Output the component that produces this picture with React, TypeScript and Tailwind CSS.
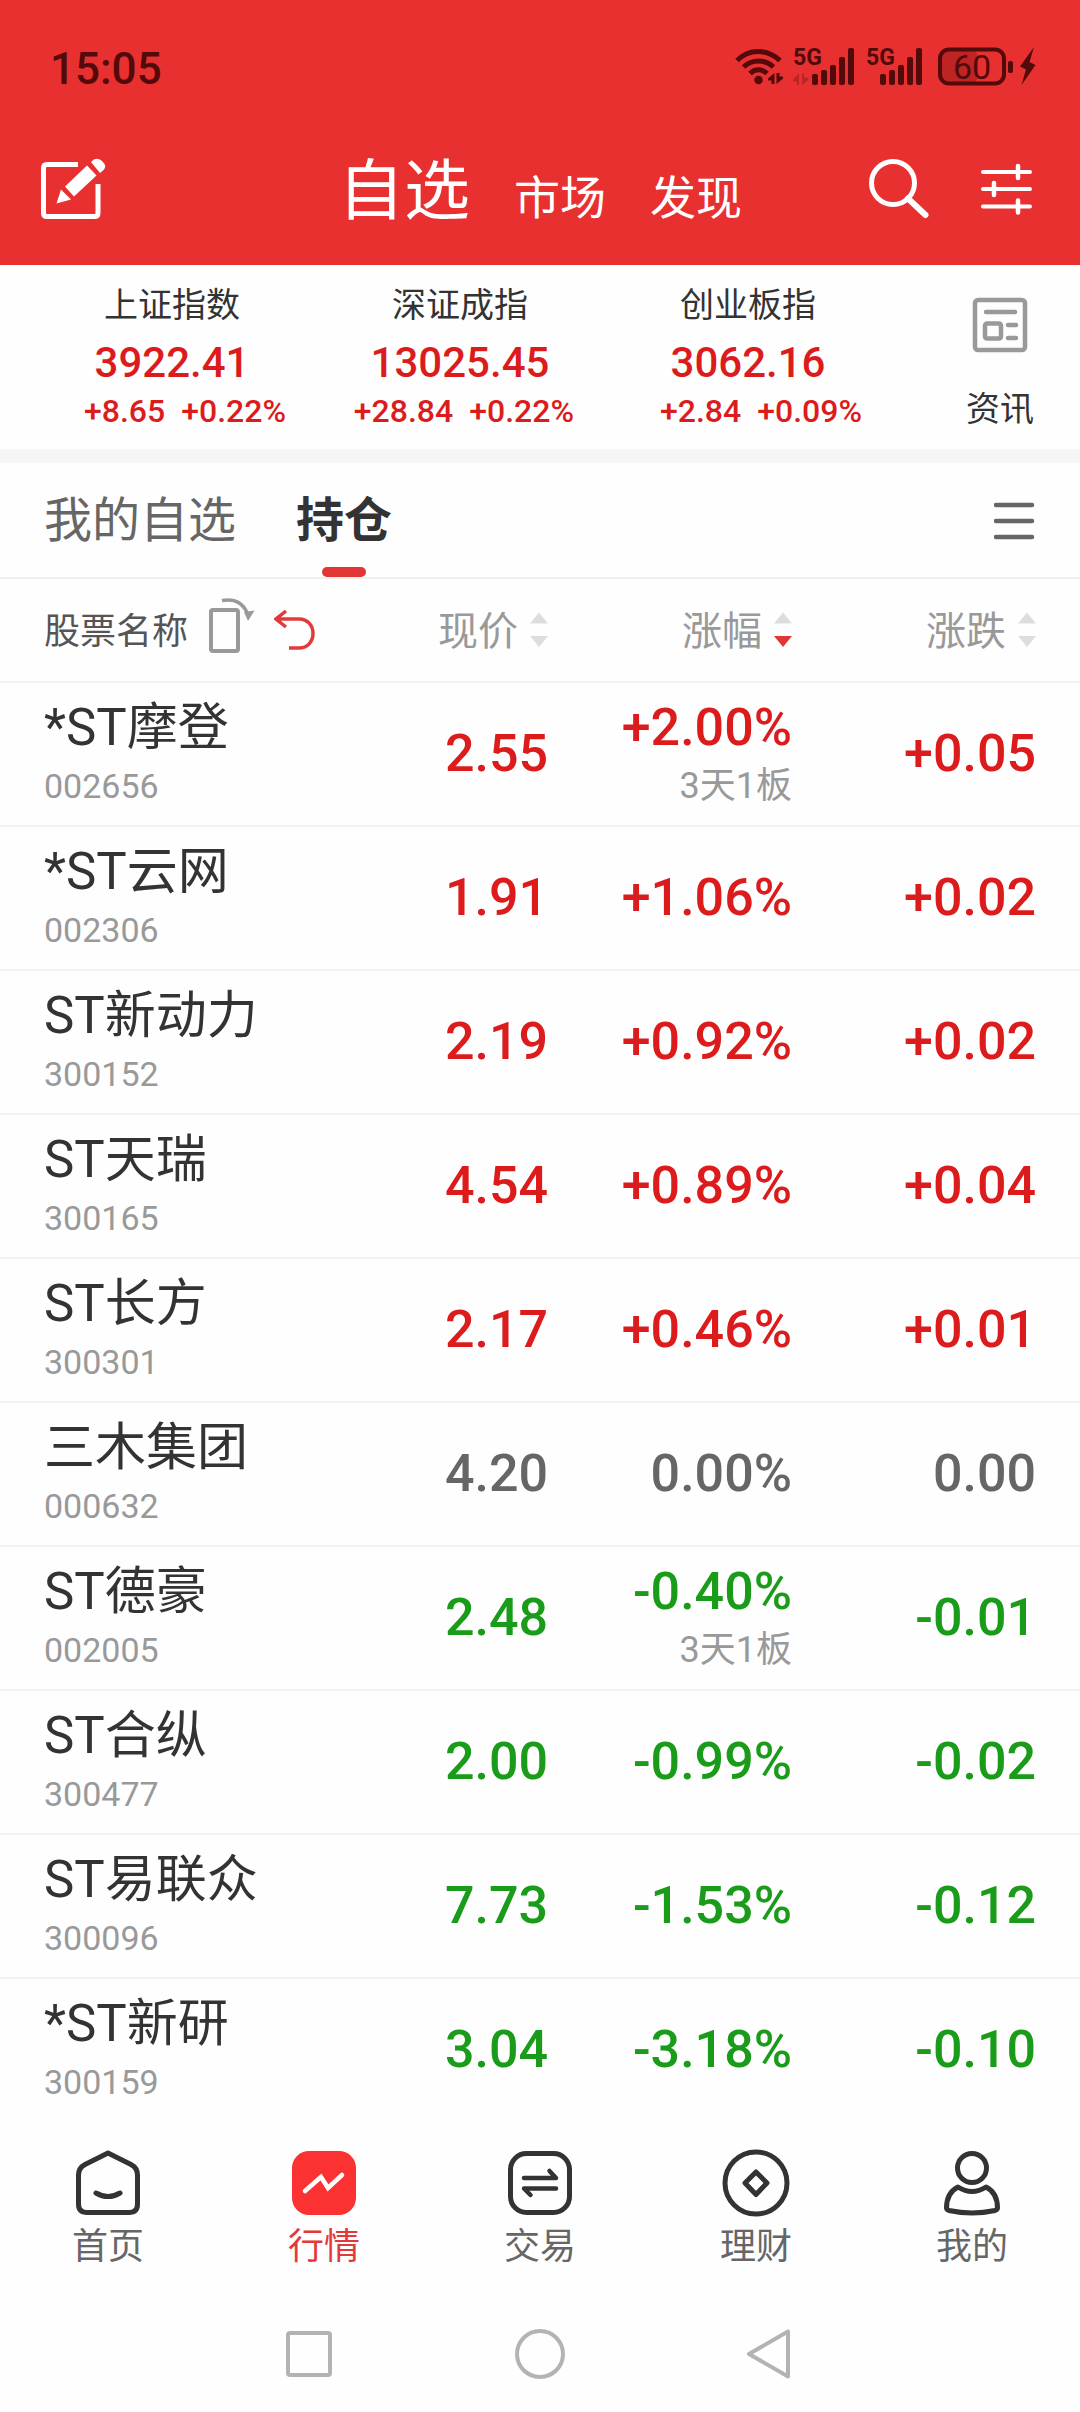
import type { ReactNode } from "react";
import clsx from "clsx";

type MarketIndex = {
  name: string;
  value: string;
  change: string;
  percent: string;
};

type Holding = {
  name: string;
  code: string;
  price: string;
  percent: string;
  change: string;
  note?: string;
};

const indices: MarketIndex[] = [
  { name: "上证指数", value: "3922.41", change: "+8.65", percent: "+0.22%" },
  { name: "深证成指", value: "13025.45", change: "+28.84", percent: "+0.22%" },
  { name: "创业板指", value: "3062.16", change: "+2.84", percent: "+0.09%" },
];

const holdings: Holding[] = [
  { name: "*ST摩登", code: "002656", price: "2.55", percent: "+2.00%", change: "+0.05", note: "3天1板" },
  { name: "*ST云网", code: "002306", price: "1.91", percent: "+1.06%", change: "+0.02" },
  { name: "ST新动力", code: "300152", price: "2.19", percent: "+0.92%", change: "+0.02" },
  { name: "ST天瑞", code: "300165", price: "4.54", percent: "+0.89%", change: "+0.04" },
  { name: "ST长方", code: "300301", price: "2.17", percent: "+0.46%", change: "+0.01" },
  { name: "三木集团", code: "000632", price: "4.20", percent: "0.00%", change: "0.00" },
  { name: "ST德豪", code: "002005", price: "2.48", percent: "-0.40%", change: "-0.01", note: "3天1板" },
  { name: "ST合纵", code: "300477", price: "2.00", percent: "-0.99%", change: "-0.02" },
  { name: "ST易联众", code: "300096", price: "7.73", percent: "-1.53%", change: "-0.12" },
  { name: "*ST新研", code: "300159", price: "3.04", percent: "-3.18%", change: "-0.10" },
];

function trendColor(change: string) {
  if (change.startsWith("+")) return "text-[#dc1c1c]";
  if (change.startsWith("-")) return "text-[#1a9c1a]";
  return "text-[#666666]";
}

function WifiIcon() {
  return (
    <svg width="48" height="40" viewBox="0 0 48 40" fill="none" aria-hidden="true">
      <g stroke="#520a0a" strokeWidth="5">
        <path d="M2 13.500C14 1.500 32 1.500 45 13.500" />
        <path d="M8.500 20C17 12 30 12 38.500 20" />
        <path d="M15 26.500C20 21.500 27 21.500 32 26.500" />
      </g>
      <circle cx="23.500" cy="33" r="4.300" fill="#520a0a" />
      <path d="M33 31.500L39.500 26V37H36.500V33.500H33ZM48 31.500L41.500 37V26H44.500V29.500H48Z" fill="#520a0a" />
    </svg>
  );
}

function SignalIcon({ data = false }: { data?: boolean }) {
  const start = data ? 19 : 14;
  return (
    <svg
      width={data ? 63 : 58}
      height="56"
      viewBox={data ? "0 -8 63 56" : "0 -8 58 56"}
      fill="#520a0a"
      aria-hidden="true"
    >
      <text x="0" y="18" fontSize="23" fontWeight="700" fontFamily="Roboto, sans-serif">
        5G
      </text>
      {data ? (
        <path d="M0 32.500L6 26.500V38H4V34.500H0ZM15.500 32.500L9 38V26.500H11V30.500H15.500Z" opacity="0.300" />
      ) : null}
      {[11, 15, 20, 28, 37].map((height, index) => (
        <rect key={height} x={start + index * 9} y={38 - height} width="6" height={height} rx="2" />
      ))}
    </svg>
  );
}

function BatteryIcon() {
  return (
    <svg width="100" height="40" viewBox="0 0 100 40" fill="none" aria-hidden="true">
      <rect x="2" y="2.500" width="38" height="34" rx="8" fill="#bf2424" />
      <rect x="2" y="2.500" width="64" height="34" rx="9" stroke="#520a0a" strokeWidth="4" />
      <rect x="70" y="14" width="5" height="12" rx="2" fill="#520a0a" />
      <text
        x="34"
        y="32"
        fontSize="34"
        textAnchor="middle"
        fontFamily="Roboto, sans-serif"
        fill="#520a0a"
      >
        60
      </text>
      <path d="M96 0L82 19.500L88 22.500L83.500 38L97.500 18L91.500 15Z" fill="#520a0a" />
    </svg>
  );
}

function EditIcon() {
  return (
    <svg width="66" height="64" viewBox="0 0 66 64" fill="none" aria-hidden="true">
      <path
        d="M38 6.500H7Q3.500 6.500 3.500 10V55Q3.500 58.500 7 58.500H54.500Q58 58.500 58 55V26"
        stroke="#ffffff"
        strokeWidth="5"
      />
      <path d="M25 28.500L47 7.500L56.500 17.500L34 38.500Z" fill="#ffffff" />
      <path d="M21 31.500L31 41.500L16.500 45.500Z" fill="#ffffff" />
      <path d="M51 4Q56 -2 62 3Q67.500 8 63.500 12L60 15Z" fill="#ffffff" />
    </svg>
  );
}

function SearchIcon() {
  return (
    <svg width="62" height="62" viewBox="0 0 62 62" fill="none" aria-hidden="true">
      <circle cx="25" cy="25" r="21.500" stroke="#ffffff" strokeWidth="5" />
      <path d="M40 40.500L57.500 57" stroke="#ffffff" strokeWidth="6" strokeLinecap="round" />
    </svg>
  );
}

function FilterIcon() {
  return (
    <svg width="52" height="52" viewBox="0 0 52 52" fill="none" aria-hidden="true">
      <g stroke="#ffffff" strokeWidth="4" strokeLinecap="round">
        <path d="M3 9H50M3 26H50M3 43.500H50" />
        <path d="M38 3V15M14 20V32M38 37.500V49.500" strokeWidth="4.500" />
      </g>
    </svg>
  );
}

function NewsIcon() {
  return (
    <svg width="56" height="56" viewBox="0 0 56 56" fill="none" aria-hidden="true">
      <g stroke="#999999" strokeWidth="4.500" strokeLinecap="round">
        <rect x="3" y="3" width="50" height="50" rx="3" />
        <path d="M14 15H43M36 28H44M36 41H44" />
        <rect x="13" y="26.500" width="16" height="15" rx="2" />
      </g>
    </svg>
  );
}

function MenuIcon() {
  return (
    <svg width="42" height="38" viewBox="0 0 42 38" fill="none" aria-hidden="true">
      <path d="M2 3H38M2 19H38M2 35H38" stroke="#666666" strokeWidth="4.500" strokeLinecap="round" />
    </svg>
  );
}

function RotateIcon() {
  return (
    <svg width="48" height="56" viewBox="0 0 48 56" fill="none" aria-hidden="true">
      <rect x="3" y="12" width="27" height="41" rx="2" stroke="#999999" strokeWidth="4" />
      <path d="M14 2.500C28 0 36 6 40 17" stroke="#999999" strokeWidth="3.500" />
      <path d="M36 14L46.500 12.500L40 23Z" fill="#999999" />
    </svg>
  );
}

function UndoIcon() {
  return (
    <svg width="42" height="42" viewBox="0 0 42 42" fill="none" aria-hidden="true">
      <path
        d="M12 2L2 10L12 18M2 10H25C34 10 39 17 39 24.500C39 32 34 39 25 39H15"
        stroke="#e23a3a"
        strokeWidth="3.500"
      />
    </svg>
  );
}

function SortIcon({ active = false }: { active?: boolean }) {
  return (
    <svg width="18" height="36" viewBox="0 0 18 36" aria-hidden="true">
      <path d="M9 0.500L18 11.500H0Z" fill="#dddddd" />
      <path d="M9 35L18 24H0Z" fill={active ? "#e23535" : "#dddddd"} />
    </svg>
  );
}

function TabIcon({ children }: { children: ReactNode }) {
  return (
    <svg
      width="68"
      height="68"
      viewBox="0 0 68 68"
      fill="none"
      stroke="#333333"
      strokeWidth="5"
      strokeLinecap="round"
      strokeLinejoin="round"
      aria-hidden="true"
    >
      {children}
    </svg>
  );
}

const tabs = [
  {
    label: "首页",
    icon: (
      <TabIcon>
        <path d="M34 4L11 15.500Q4.500 19 4.500 26V55Q4.500 63.500 13 63.500H55Q63.500 63.500 63.500 55V26Q63.500 19 57 15.500Z" />
        <path d="M22 44Q34 51 46 44" />
      </TabIcon>
    ),
  },
  {
    label: "行情",
    active: true,
    icon: (
      <TabIcon>
        <rect x="2" y="2" width="64" height="64" rx="17" fill="#fc3131" stroke="none" />
        <path d="M15 42L31 28L38 39L52 26" stroke="#ffffff" strokeWidth="4.500" strokeLinejoin="miter" />
      </TabIcon>
    ),
  },
  {
    label: "交易",
    icon: (
      <TabIcon>
        <rect x="4.500" y="4.500" width="59" height="59" rx="16" />
        <path d="M18 29H50L43.500 22M50 39.500H18L24.500 46" strokeWidth="4.500" />
      </TabIcon>
    ),
  },
  {
    label: "理财",
    icon: (
      <TabIcon>
        <circle cx="34" cy="34" r="31" />
        <path d="M34 23L45 34L34 45.500L23 34Z" />
      </TabIcon>
    ),
  },
  {
    label: "我的",
    icon: (
      <TabIcon>
        <circle cx="34" cy="19" r="14.500" />
        <path d="M20 38Q34 47 48 38C56 42 59.500 50 59.500 59Q59.500 60.500 57 61.500Q34 66.500 11 61.500Q8.500 60.500 8.500 59C8.500 50 12 42 20 38Z" />
      </TabIcon>
    ),
  },
];

function SortHeader({ label, active }: { label: string; active?: boolean }) {
  return (
    <button type="button" className="inline-flex items-center gap-3 text-[40px] font-normal text-[#999999]">
      <span className="pt-1">{label}</span>
      <SortIcon active={active} />
    </button>
  );
}

function HoldingRow({ item }: { item: Holding }) {
  const color = trendColor(item.change);

  return (
    <tr className="h-36 border-b-2 border-[#f2f2f2] last:border-transparent">
      <th scope="row" className="pl-11 text-left font-normal">
        <div className="text-[51px] leading-[64px] text-[#333333]">{item.name}</div>
        <div className="text-[34px] leading-[52px] text-[#999999]">{item.code}</div>
      </th>
      <td className={clsx("text-right text-[52px] font-medium", color)}>{item.price}</td>
      <td className="text-right">
        <div className={clsx("text-[52px] leading-[64px] font-medium", color)}>{item.percent}</div>
        {item.note ? <div className="text-[36px] leading-[52px] text-[#999999]">{item.note}</div> : null}
      </td>
      <td className={clsx("pr-11 text-right text-[52px] font-medium", color)}>{item.change}</td>
    </tr>
  );
}

export default function App() {
  return (
    <div className="min-h-screen w-full bg-[#fefefe] font-[Roboto,'Noto_Sans_CJK_SC',sans-serif]">
      <header className="bg-[#e93030]">
        <div className="flex h-[134px] items-center justify-between pr-[42px] pl-[50px]">
          <span className="pt-1 text-[44px] font-medium text-[#520a0a]">15:05</span>
          <div className="flex items-center gap-[10px]">
            <WifiIcon />
            <SignalIcon data />
            <SignalIcon />
            <span className="pl-1">
              <BatteryIcon />
            </span>
          </div>
        </div>
        <div className="flex h-[131px] items-start justify-between px-10">
          <button type="button" aria-label="编辑" className="flex w-[172px] pt-6">
            <EditIcon />
          </button>
          <nav className="flex items-baseline gap-11 text-[46px] text-white">
            <a href="#watchlist" className="text-[66px] leading-[116px]">
              自选
            </a>
            <a href="#market">市场</a>
            <a href="#discover">发现</a>
          </nav>
          <div className="flex w-[172px] items-center justify-between pt-6">
            <button type="button" aria-label="搜索">
              <SearchIcon />
            </button>
            <button type="button" aria-label="筛选" className="pr-2">
              <FilterIcon />
            </button>
          </div>
        </div>
      </header>

      <section className="flex h-[184px] pl-7">
        <div className="grid flex-1 grid-cols-3">
          {indices.map((item) => (
            <a key={item.name} href="#index" className="flex flex-col pt-4">
              <span className="text-center text-[34px] leading-[48px] text-[#333333]">{item.name}</span>
              <span className="mt-1 text-center text-[42px] leading-[60px] font-medium text-[#dc1c1c]">
                {item.value}
              </span>
              <span className="flex justify-end gap-4 pr-[30px] text-[32px] leading-[36px] font-medium text-[#dc1c1c]">
                <span>{item.change}</span>
                <span>{item.percent}</span>
              </span>
            </a>
          ))}
        </div>
        <a href="#news" className="flex w-[188px] flex-col items-center pt-8 pl-7 text-[34px] leading-[48px] text-[#333333]">
          <NewsIcon />
          <span className="mt-8">资讯</span>
        </a>
      </section>

      <div className="h-[14px] bg-[#f5f5f5]" />

      <div className="flex h-[116px] items-center justify-between border-b-2 border-[#f0f0f0] pr-11 pl-11">
        <div className="flex h-full gap-[60px] text-[48px]">
          <button type="button" className="pt-0.5 text-[#666666]">
            我的自选
          </button>
          <button type="button" className="relative pt-0.5 font-bold text-[#333333]">
            持仓
            <span className="absolute bottom-0 left-1/2 h-[10px] w-11 -translate-x-1/2 rounded-full bg-[#e23535]" />
          </button>
        </div>
        <button type="button" aria-label="菜单" className="pt-0.5">
          <MenuIcon />
        </button>
      </div>

      <table className="w-full table-fixed border-collapse">
        <colgroup>
          <col />
          <col className="w-[212px]" />
          <col className="w-[244px]" />
          <col className="w-[288px]" />
        </colgroup>
        <thead>
          <tr className="h-[103px] border-b-2 border-[#f2f2f2]">
            <th scope="col" className="pl-11 text-left">
              <div className="flex items-center text-[36px] font-normal text-[#555555]">
                <span className="pt-1">股票名称</span>
                <button type="button" aria-label="横屏" className="ml-5 pb-2">
                  <RotateIcon />
                </button>
                <button type="button" aria-label="恢复排序" className="ml-[18px]">
                  <UndoIcon />
                </button>
              </div>
            </th>
            <th scope="col" className="text-right">
              <SortHeader label="现价" />
            </th>
            <th scope="col" className="text-right">
              <SortHeader label="涨幅" active />
            </th>
            <th scope="col" className="pr-11 text-right">
              <SortHeader label="涨跌" />
            </th>
          </tr>
        </thead>
        <tbody>
          {holdings.map((item) => (
            <HoldingRow key={item.code} item={item} />
          ))}
        </tbody>
      </table>

      <nav className="grid h-[172px] grid-cols-5 pt-[26px]">
        {tabs.map((tab) => (
          <a
            key={tab.label}
            href="#tab"
            className={clsx(
              "flex flex-col items-center text-[36px] leading-[60px]",
              tab.active ? "text-[#e23a3a]" : "text-[#666666]"
            )}
          >
            {tab.icon}
            <span>{tab.label}</span>
          </a>
        ))}
      </nav>

      <div className="flex items-center justify-center gap-[180px] pt-[34px]">
        <button type="button" aria-label="最近任务">
          <svg width="50" height="50" viewBox="0 0 50 50" fill="none" stroke="#b3b3b3" strokeWidth="4" aria-hidden="true">
            <rect x="3" y="4" width="42" height="42" rx="2" />
          </svg>
        </button>
        <button type="button" aria-label="主屏幕">
          <svg width="50" height="50" viewBox="0 0 50 50" fill="none" stroke="#b3b3b3" strokeWidth="4" aria-hidden="true">
            <circle cx="25" cy="25" r="23" />
          </svg>
        </button>
        <button type="button" aria-label="返回">
          <svg
            width="50"
            height="50"
            viewBox="0 0 50 50"
            fill="none"
            stroke="#b3b3b3"
            strokeWidth="4"
            strokeLinejoin="round"
            aria-hidden="true"
          >
            <path d="M4 25L43 2.500V47.500Z" />
          </svg>
        </button>
      </div>
    </div>
  );
}
